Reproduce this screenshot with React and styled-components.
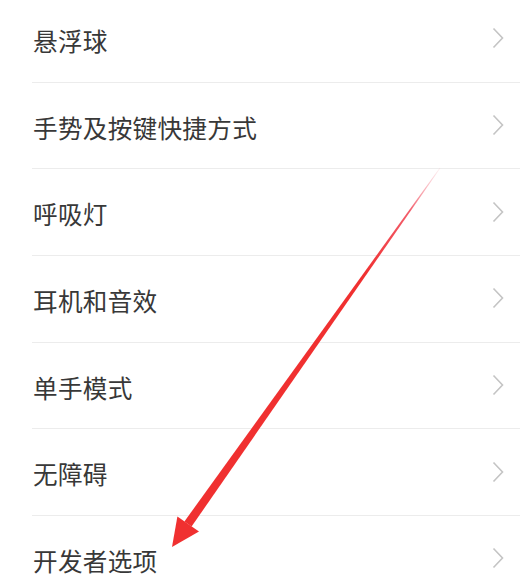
import React from 'react';
import styled, { createGlobalStyle } from 'styled-components';

const GlobalStyle = createGlobalStyle`
    html, body {
        margin: 0;
        padding: 0;
        background: #fff;
        overflow: hidden;
    }
    body {
        font-family: "Noto Sans CJK SC", "Noto Sans", sans-serif;
    }
`;

const Page = styled.div`
    position: relative;
    width: 520px;
    height: 579px;
    overflow: hidden;
    background: #fff;
`;

const List = styled.ul`
    list-style: none;
    margin: -4px 0 0 0;
    padding: 0;
`;

const Row = styled.li`
    box-sizing: border-box;
    height: 86.7px;
    margin-left: 32px;
    padding: 2px 16px 0 1px;
    display: flex;
    align-items: center;
    justify-content: space-between;
    border-bottom: 1px solid #ececec;
`;

const Label = styled.span`
    font-size: 24.6px;
    color: #383838;
    letter-spacing: 0.3px;
`;

const Chevron = styled.svg`
    width: 12px;
    height: 22px;
    margin-top: -3px;
    flex-shrink: 0;
`;

const Overlay = styled.svg`
    position: absolute;
    left: 0;
    top: 0;
    pointer-events: none;
`;

const items = ['悬浮球', '手势及按键快捷方式', '呼吸灯', '耳机和音效', '单手模式', '无障碍', '开发者选项'];

const Arrow = () => (
    <Overlay width="520" height="579" viewBox="0 0 520 579">
        <defs>
            <linearGradient id="fade" x1="440" y1="168" x2="188" y2="524" gradientUnits="userSpaceOnUse">
                <stop offset="0" stopColor="#f47a8a" stopOpacity="0.1" />
                <stop offset="0.12" stopColor="#f04050" stopOpacity="0.85" />
                <stop offset="0.3" stopColor="#f03030" />
                <stop offset="1" stopColor="#f03030" />
            </linearGradient>
        </defs>
        <polygon points="440.3,168.2 439.7,167.8 184.4,521.5 191.6,526.5" fill="url(#fade)" />
        <polygon points="172,547 177.4,516.5 199,531.5" fill="#f03030" />
    </Overlay>
);

const App = () => (
    <Page>
        <GlobalStyle />
        <List>
            {items.map(item => (
                <Row key={item}>
                    <Label>{item}</Label>
                    <Chevron viewBox="0 0 12 22">
                        <polyline points="1.5,1.5 10.5,11 1.5,20.5" fill="none" stroke="#c4c4c4" strokeWidth="1.6" />
                    </Chevron>
                </Row>
            ))}
        </List>
        <Arrow />
    </Page>
);

export default App;
